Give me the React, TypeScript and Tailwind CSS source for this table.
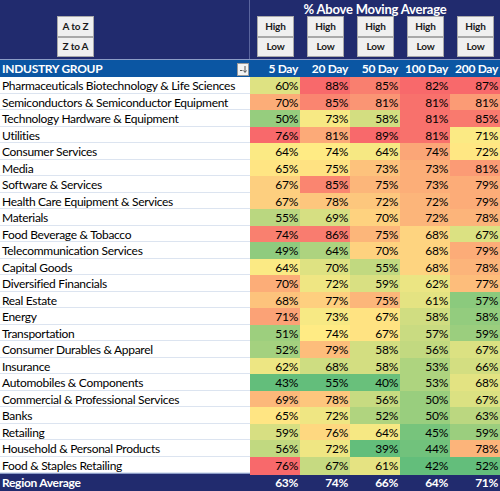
import React from "react";

type Row = [string, number[]];

const rows: Row[] = [
  ["Pharmaceuticals Biotechnology & Life Sciences", [60, 88, 85, 82, 87]],
  ["Semiconductors & Semiconductor Equipment", [70, 85, 81, 81, 81]],
  ["Technology Hardware & Equipment", [50, 73, 58, 81, 85]],
  ["Utilities", [76, 81, 89, 81, 71]],
  ["Consumer Services", [64, 74, 64, 74, 72]],
  ["Media", [65, 75, 73, 73, 81]],
  ["Software & Services", [67, 85, 75, 73, 79]],
  ["Health Care Equipment & Services", [67, 78, 72, 72, 79]],
  ["Materials", [55, 69, 70, 72, 78]],
  ["Food Beverage & Tobacco", [74, 86, 75, 68, 67]],
  ["Telecommunication Services", [49, 64, 70, 68, 79]],
  ["Capital Goods", [64, 70, 55, 68, 78]],
  ["Diversified Financials", [70, 72, 59, 62, 77]],
  ["Real Estate", [68, 77, 75, 61, 57]],
  ["Energy", [71, 73, 67, 58, 58]],
  ["Transportation", [51, 74, 67, 57, 59]],
  ["Consumer Durables & Apparel", [52, 79, 58, 56, 67]],
  ["Insurance", [62, 68, 58, 53, 66]],
  ["Automobiles & Components", [43, 55, 40, 53, 68]],
  ["Commercial & Professional Services", [69, 78, 56, 50, 67]],
  ["Banks", [65, 72, 52, 50, 63]],
  ["Retailing", [59, 76, 64, 45, 59]],
  ["Household & Personal Products", [56, 72, 39, 44, 78]],
  ["Food & Staples Retailing", [76, 67, 61, 42, 52]],
];

const average = [63, 74, 66, 64, 71];
const periods = ["5 Day", "20 Day", "50 Day", "100 Day", "200 Day"];

// excel style 3-colour scale: low green, 50th percentile yellow, high red
const GREEN = [99, 190, 123];
const YELLOW = [255, 235, 132];
const RED = [248, 105, 107];

function mix(a: number[], b: number[], t: number) {
  const c = a.map((v, i) => Math.round(v + (b[i] - v) * t));
  return `rgb(${c[0]}, ${c[1]}, ${c[2]})`;
}

const scales = periods.map((_, col) => {
  const vals = rows.map((r) => r[1][col]).sort((a, b) => a - b);
  const pos = (vals.length - 1) * 0.5;
  const lo = Math.floor(pos);
  const mid = vals[lo] + (vals[Math.ceil(pos)] - vals[lo]) * (pos - lo);
  return { min: vals[0], mid, max: vals[vals.length - 1] };
});

function cellColor(v: number, col: number) {
  const { min, mid, max } = scales[col];
  if (v <= mid) return mix(GREEN, YELLOW, mid === min ? 1 : (v - min) / (mid - min));
  return mix(YELLOW, RED, max === mid ? 0 : (v - mid) / (max - mid));
}

function XlButton({ label }: { label: string }) {
  return (
    <div className="flex h-[20.5px] w-[37px] items-center justify-center border border-[#a9a9a9] bg-[#f0f0f0] text-[10px] font-bold tracking-[-0.2px] text-[#1a1a1a]">
      {label}
    </div>
  );
}

export default function App() {
  return (
    <div
      className="h-[491px] w-[500px] overflow-hidden bg-white text-black"
      style={{ fontFamily: "Lato, 'Open Sans', sans-serif" }}
    >
      {/* top control band */}
      <div className="flex h-[60px] border-b border-[#8c9cc6] bg-[#212b6e]">
        <div className="w-[251px] border-r border-[#5a659e] pl-[57px] pt-[16px]">
          <XlButton label="A to Z" />
          <XlButton label="Z to A" />
        </div>
        <div className="flex flex-1 flex-col">
          <div className="h-[16px] text-center text-[13px] font-bold leading-[18px] tracking-[-0.2px] text-white">
            % Above Moving Average
          </div>
          <div className="flex">
            {periods.map((p) => (
              <div key={p} className="w-[50px] pl-[7px]">
                <XlButton label="High" />
                <XlButton label="Low" />
              </div>
            ))}
          </div>
        </div>
      </div>

      {/* header row */}
      <div className="grid h-[17px] grid-cols-[250px_repeat(5,50px)] bg-[#0b56a3] text-[12px] font-bold tracking-[-0.3px] text-white">
        <div className="flex items-center justify-between pl-[2px] pr-[1px]">
          <span>INDUSTRY GROUP</span>
          <span className="flex h-[13px] w-[12px] items-center justify-center border border-[#9a9a9a] bg-[#f3f3f3]">
            <svg width="9" height="9" viewBox="0 0 9 9">
              <path d="M1 5.5h2.5" stroke="#555" strokeWidth="1" />
              <path d="M6 1v6M4.5 5.5L6 7.5 7.5 5.5" stroke="#555" strokeWidth="1" fill="none" />
            </svg>
          </span>
        </div>
        {periods.map((p) => (
          <div key={p} className="flex items-center justify-end pr-[2px]">
            {p}
          </div>
        ))}
      </div>

      {/* data rows */}
      {rows.map(([name, vals]) => (
        <div
          key={name}
          className="grid h-[16.5px] grid-cols-[250px_repeat(5,50px)] border-b border-[#dce4f0] text-[12px] tracking-[-0.3px]"
        >
          <div className="flex items-center whitespace-nowrap pl-[2px]">{name}</div>
          {vals.map((v, i) => (
            <div
              key={i}
              className="flex items-center justify-end pr-[2px]"
              style={{ backgroundColor: cellColor(v, i) }}
            >
              {v}%
            </div>
          ))}
        </div>
      ))}

      {/* average row */}
      <div className="grid h-[18px] grid-cols-[250px_repeat(5,50px)] border-t border-[#8c9cc6] bg-[#212b6e] text-[12px] font-bold tracking-[-0.3px] text-white">
        <div className="flex items-center pl-[2px]">Region Average</div>
        {average.map((v, i) => (
          <div key={i} className="flex items-center justify-end pr-[2px]">
            {v}%
          </div>
        ))}
      </div>
    </div>
  );
}
